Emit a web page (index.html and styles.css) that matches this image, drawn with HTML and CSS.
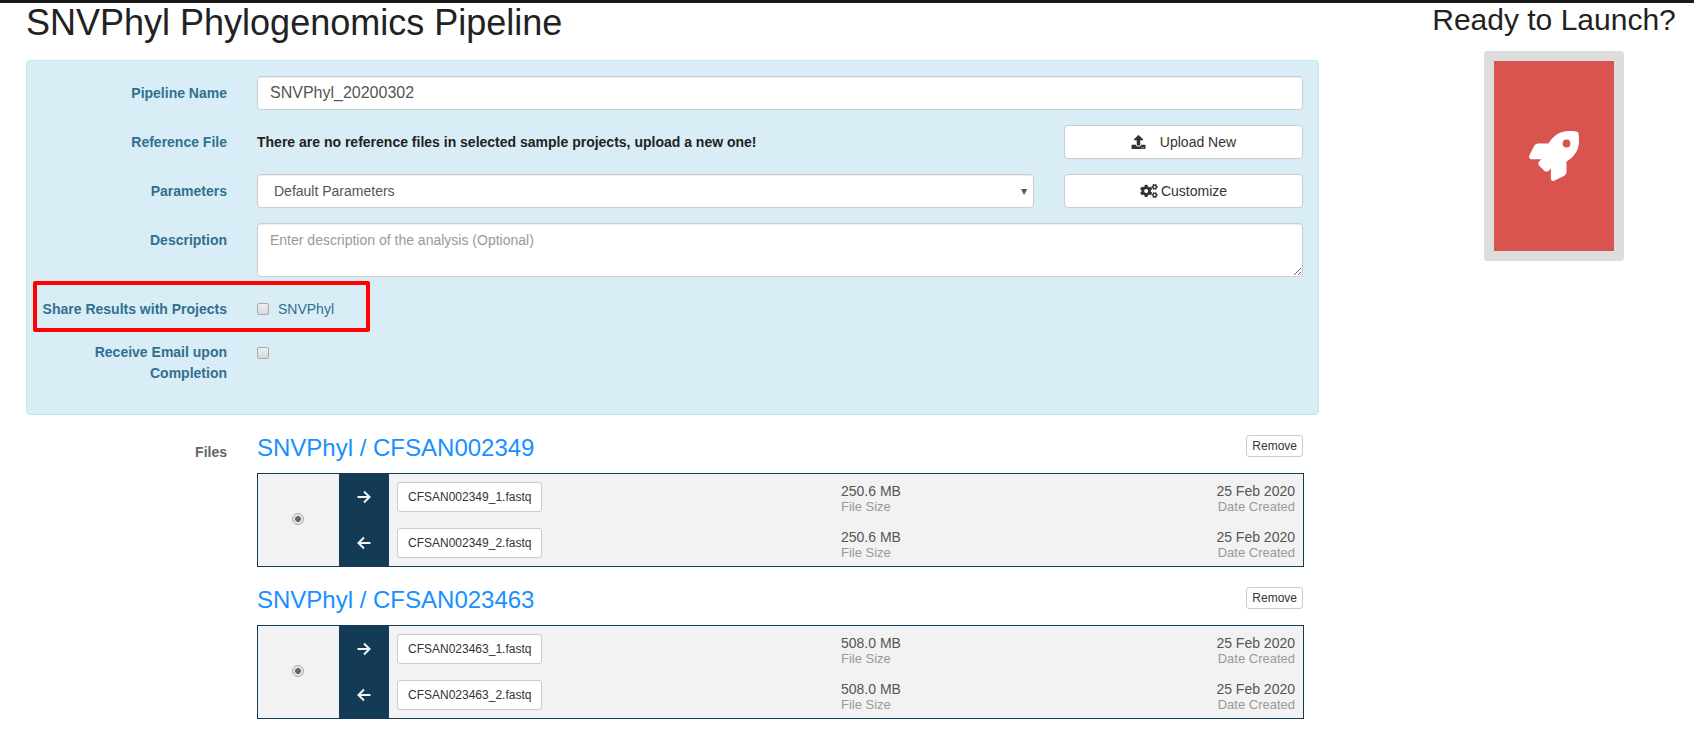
FILE: index.html
```html
<!DOCTYPE html>
<html>
	<head>
		<meta charset="UTF-8">
		<meta name="viewport" content="width=device-width, initial-scale=1.0" />
		<title>SNVPhyl Phylogenomics Pipeline</title>
		<link rel="stylesheet" href="styles.css">
	</head>
	<body>
		<svg class="sprite">
			<symbol id="i-upload" viewBox="0 0 512 512"><path d="M296 384h-80c-13.3 0-24-10.7-24-24V192h-87.7c-17.8 0-26.7-21.5-14.1-34.1L242.3 5.7c7.5-7.5 19.8-7.5 27.3 0l152.2 152.2c12.6 12.6 3.7 34.1-14.1 34.1H320v168c0 13.3-10.7 24-24 24zm216-8v112c0 13.3-10.7 24-24 24H24c-13.3 0-24-10.7-24-24V376c0-13.3 10.7-24 24-24h136v8c0 30.9 25.1 56 56 56h80c30.9 0 56-25.1 56-56v-8h136c13.3 0 24 10.7 24 24zm-124 88c0-11-9-20-20-20s-20 9-20 20 9 20 20 20 20-9 20-20zm64 0c0-11-9-20-20-20s-20 9-20 20 9 20 20 20 20-9 20-20z"/></symbol>
			<symbol id="i-cogs" viewBox="0 0 640 512"><path d="M512.1 191l-8.2 14.3c-3 5.3-9.4 7.5-15.1 5.4-11.8-4.4-22.6-10.7-32.1-18.6-4.6-3.8-5.8-10.5-2.8-15.7l8.2-14.3c-6.9-8-12.3-17.3-15.9-27.4h-16.5c-6 0-11.2-4.3-12.2-10.3-2-12-2.1-24.6 0-37.1 1-6 6.2-10.4 12.2-10.4h16.5c3.6-10.1 9-19.4 15.9-27.4l-8.2-14.3c-3-5.2-1.9-11.9 2.8-15.7 9.5-7.9 20.4-14.2 32.1-18.6 5.7-2.1 12.1.1 15.1 5.4l8.2 14.3c10.5-1.9 21.2-1.9 31.7 0L552 6.3c3-5.3 9.4-7.5 15.1-5.4 11.8 4.4 22.6 10.7 32.1 18.6 4.6 3.8 5.8 10.5 2.8 15.7l-8.2 14.3c6.9 8 12.3 17.3 15.9 27.4h16.5c6 0 11.2 4.3 12.2 10.3 2 12 2.1 24.6 0 37.1-1 6-6.2 10.4-12.2 10.4h-16.5c-3.6 10.1-9 19.4-15.9 27.4l8.2 14.3c3 5.2 1.9 11.9-2.8 15.7-9.5 7.9-20.4 14.2-32.1 18.6-5.7 2.1-12.1-.1-15.1-5.4l-8.2-14.3c-10.4 1.9-21.2 1.9-31.7 0zm-10.5-58.8c38.5 29.6 82.4-14.3 52.8-52.8-38.5-29.7-82.4 14.3-52.8 52.8zM386.3 286.1l33.7 16.8c10.1 5.8 14.5 18.1 10.5 29.1-8.9 24.2-26.4 46.4-42.6 65.8-7.4 8.9-20.2 11.1-30.3 5.3l-29.1-16.8c-16 13.7-34.6 24.6-54.9 31.7v33.6c0 11.6-8.3 21.6-19.7 23.6-24.6 4.2-50.4 4.4-75.9 0-11.5-2-20-11.9-20-23.6V418c-20.3-7.2-38.9-18-54.9-31.7L74 403c-10 5.8-22.9 3.6-30.3-5.3-16.2-19.4-33.3-41.6-42.2-65.7-4-10.9.4-23.2 10.5-29.1l33.3-16.8c-3.9-20.9-3.9-42.4 0-63.4L12 205.8c-10.1-5.8-14.6-18.1-10.5-29 8.9-24.2 26-46.4 42.2-65.8 7.4-8.9 20.2-11.1 30.3-5.3l29.1 16.8c16-13.7 34.6-24.6 54.9-31.7V57.1c0-11.5 8.2-21.5 19.6-23.5 24.6-4.2 50.5-4.4 76-.1 11.5 2 20 11.9 20 23.6v33.6c20.3 7.2 38.9 18 54.9 31.7l29.1-16.8c10-5.8 22.9-3.6 30.3 5.3 16.2 19.4 33.2 41.6 42.1 65.8 4 10.9.1 23.2-10 29.1l-33.7 16.8c3.9 21 3.9 42.5 0 63.5zm-117.6 21.1c59.2-77-28.7-164.9-105.7-105.7-59.2 77 28.7 164.9 105.7 105.7zm243.4 182.7l-8.2 14.3c-3 5.3-9.4 7.5-15.1 5.4-11.8-4.4-22.6-10.7-32.1-18.6-4.6-3.8-5.8-10.5-2.8-15.7l8.2-14.3c-6.9-8-12.3-17.3-15.9-27.4h-16.5c-6 0-11.2-4.3-12.2-10.3-2-12-2.1-24.6 0-37.1 1-6 6.2-10.4 12.2-10.4h16.5c3.6-10.1 9-19.4 15.9-27.4l-8.2-14.3c-3-5.2-1.9-11.9 2.8-15.7 9.5-7.9 20.4-14.2 32.1-18.6 5.7-2.1 12.1.1 15.1 5.4l8.2 14.3c10.5-1.9 21.2-1.9 31.7 0l8.2-14.3c3-5.3 9.4-7.5 15.1-5.4 11.8 4.4 22.6 10.7 32.1 18.6 4.6 3.8 5.8 10.5 2.8 15.7l-8.2 14.3c6.9 8 12.3 17.3 15.9 27.4h16.5c6 0 11.2 4.3 12.2 10.3 2 12 2.1 24.6 0 37.1-1 6-6.2 10.4-12.2 10.4h-16.5c-3.6 10.1-9 19.4-15.9 27.4l8.2 14.3c3 5.2 1.9 11.9-2.8 15.7-9.5 7.9-20.4 14.2-32.1 18.6-5.7 2.1-12.1-.1-15.1-5.4l-8.2-14.3c-10.4 1.9-21.2 1.9-31.7 0zM501.6 431c38.5 29.6 82.4-14.3 52.8-52.8-38.5-29.6-82.4 14.3-52.8 52.8z"/></symbol>
			<symbol id="i-rocket" viewBox="0 0 512 512"><path d="M505.12019,19.09375c-1.18945-5.53125-6.65819-11-12.207-12.1875C460.716,0,435.507,0,410.40747,0,307.17523,0,245.26909,55.20312,199.05238,128H94.83772c-16.34763.01562-35.55658,11.875-42.88664,26.48438L2.51562,253.29688A28.4,28.4,0,0,0,0,264a24.00867,24.00867,0,0,0,24.00582,24H127.81618l-22.47457,22.46875c-11.36521,11.36133-12.99607,32.25781,0,45.25L156.24582,406.625c11.15623,11.1875,32.15619,13.15625,45.27726,0l22.47457-22.46875V488a24.00867,24.00867,0,0,0,24.00581,24,28.55934,28.55934,0,0,0,10.707-2.51562l98.72834-49.39063c14.62888-7.29687,26.50776-26.5,26.50776-42.85937V312.79688c72.59753-46.3125,128.03493-108.40626,128.03493-211.09376C512.07526,76.5,512.07526,51.29688,505.12019,19.09375ZM384.04033,168A40,40,0,1,1,424.05,128,40.02322,40.02322,0,0,1,384.04033,168Z"/></symbol>
			<symbol id="i-right" viewBox="0 0 14 14"><path class="arrow-line" d="M.5 7H12.5M7 1.5L12.5 7L7 12.5"/></symbol>
			<symbol id="i-left" viewBox="0 0 14 14"><path class="arrow-line" d="M13.5 7H1.5M7 1.5L1.5 7L7 12.5"/></symbol>
		</svg>

		<div class="page">
			<div class="main">
				<h1 class="title">SNVPhyl Phylogenomics Pipeline</h1>

				<form class="panel">
					<div class="row">
						<label class="row-label">Pipeline Name</label>
						<input class="control control-name" type="text" value="SNVPhyl_20200302">
					</div>
					<div class="row">
						<label class="row-label">Reference File</label>
						<div class="row-split">
							<strong class="no-refs">There are no reference files in selected sample projects, upload a new one!</strong>
							<button class="btn btn-side" type="button">
								<svg class="icon icon-upload"><use href="#i-upload"></use></svg>Upload New
							</button>
						</div>
					</div>
					<div class="row">
						<label class="row-label">Parameters</label>
						<div class="row-split">
							<div class="select-wrap">
								<select class="control control-select">
									<option>Default Parameters</option>
								</select>
							</div>
							<button class="btn btn-side" type="button">
								<svg class="icon icon-cogs"><use href="#i-cogs"></use></svg>Customize
							</button>
						</div>
					</div>
					<div class="row">
						<label class="row-label">Description</label>
						<textarea class="control control-area" placeholder="Enter description of the analysis (Optional)"></textarea>
					</div>
					<div class="row row-share">
						<div class="highlight"></div>
						<label class="row-label">Share Results with Projects</label>
						<label class="check-line"><input class="check" type="checkbox">SNVPhyl</label>
					</div>
					<div class="row row-email">
						<label class="row-label">Receive Email upon Completion</label>
						<div class="check-line"><input class="check" type="checkbox"></div>
					</div>
				</form>

				<div class="files">
					<div class="files-label">Files</div>
					<div class="files-list">
						<section class="sample">
							<div class="sample-head">
								<h2 class="sample-name">SNVPhyl / CFSAN002349</h2>
								<button class="btn btn-xs" type="button">Remove</button>
							</div>
							<div class="pair">
								<div class="pair-pick"><input class="radio" type="radio" checked></div>
								<div class="pair-rows">
									<div class="file">
										<div class="file-dir"><svg class="icon-arrow"><use href="#i-right"></use></svg></div>
										<div class="file-name"><span class="file-btn">CFSAN002349_1.fastq</span></div>
										<div class="file-meta"><div class="meta-value">250.6 MB</div><div class="meta-key">File Size</div></div>
										<div class="file-meta file-date"><div class="meta-value">25 Feb 2020</div><div class="meta-key">Date Created</div></div>
									</div>
									<div class="file">
										<div class="file-dir"><svg class="icon-arrow"><use href="#i-left"></use></svg></div>
										<div class="file-name"><span class="file-btn">CFSAN002349_2.fastq</span></div>
										<div class="file-meta"><div class="meta-value">250.6 MB</div><div class="meta-key">File Size</div></div>
										<div class="file-meta file-date"><div class="meta-value">25 Feb 2020</div><div class="meta-key">Date Created</div></div>
									</div>
								</div>
							</div>
						</section>

						<section class="sample">
							<div class="sample-head">
								<h2 class="sample-name">SNVPhyl / CFSAN023463</h2>
								<button class="btn btn-xs" type="button">Remove</button>
							</div>
							<div class="pair">
								<div class="pair-pick"><input class="radio" type="radio" checked></div>
								<div class="pair-rows">
									<div class="file">
										<div class="file-dir"><svg class="icon-arrow"><use href="#i-right"></use></svg></div>
										<div class="file-name"><span class="file-btn">CFSAN023463_1.fastq</span></div>
										<div class="file-meta"><div class="meta-value">508.0 MB</div><div class="meta-key">File Size</div></div>
										<div class="file-meta file-date"><div class="meta-value">25 Feb 2020</div><div class="meta-key">Date Created</div></div>
									</div>
									<div class="file">
										<div class="file-dir"><svg class="icon-arrow"><use href="#i-left"></use></svg></div>
										<div class="file-name"><span class="file-btn">CFSAN023463_2.fastq</span></div>
										<div class="file-meta"><div class="meta-value">508.0 MB</div><div class="meta-key">File Size</div></div>
										<div class="file-meta file-date"><div class="meta-value">25 Feb 2020</div><div class="meta-key">Date Created</div></div>
									</div>
								</div>
							</div>
						</section>
					</div>
				</div>
			</div>

			<aside class="launch">
				<h2 class="launch-title">Ready to Launch?</h2>
				<div class="launch-well">
					<button class="launch-btn" type="button"><svg class="icon-rocket"><use href="#i-rocket"></use></svg></button>
				</div>
			</aside>
		</div>
	</body>
</html>
```

FILE: styles.css
```css
*{box-sizing:border-box;}
html,body{height:100%;}
body{margin:0;border-top:3px solid #1a1a1a;background:#fff;color:#333;font-family:"Liberation Sans",Arial,sans-serif;font-size:14px;line-height:20px;overflow:hidden;}
.sprite{display:none;}
.page{display:flex;}
.main{width:1293px;margin-left:26px;flex:none;}

.title{margin:0 0 17px;font-size:36px;line-height:40px;font-weight:400;color:#222;}

.panel{display:flex;flex-direction:column;gap:15px;padding:15px 15px 30px;background:#d9edf7;border:1px solid #bce8f1;border-radius:4px;}
.row{display:grid;grid-template-columns:185px 1fr;column-gap:30px;position:relative;}
.row-label{padding-top:7px;text-align:right;font-weight:700;color:#31708f;}
.row-split{display:flex;gap:30px;align-items:center;}

.control{display:block;width:100%;height:34px;padding:6px 12px;background:#fff;border:1px solid #ccc;border-radius:4px;box-shadow:inset 0 1px 1px rgba(0,0,0,.075);color:#555;font-family:inherit;font-size:14px;}
.control-name{font-size:16px;}
.control-area{height:54px;line-height:20px;}
.control-area::placeholder{color:#999;opacity:1;}
.select-wrap{position:relative;flex:1;}
.select-wrap::after{content:"\25BE";position:absolute;top:7px;right:7px;font-size:12px;color:#555;}
.control-select{appearance:none;padding-left:16px;}

.no-refs{flex:1;color:#222;}
.btn{background:#fff;border:1px solid #ccc;border-radius:4px;color:#333;font-family:inherit;font-size:14px;}
.btn-side{display:flex;align-items:center;justify-content:center;width:239px;height:34px;flex:none;}
.btn-xs{height:22px;padding:0 5px;border-radius:3px;font-size:12px;}
.icon{fill:#333;height:14px;}
.icon-upload{width:15px;margin-right:14px;}
.icon-cogs{width:18px;margin-right:3px;}

.row-share{height:28px;}
.row-email .row-label{line-height:21px;}
.highlight{position:absolute;left:-9px;top:-11px;width:337px;height:51px;border:4px solid #f00;border-radius:2px;pointer-events:none;}
.check-line{display:flex;align-items:center;gap:9px;height:20px;margin-top:7px;color:#31708f;font-weight:400;}
.row-email .check-line{margin-top:8px;}
.check{appearance:none;width:12px;height:12px;margin:0;background:linear-gradient(#eee,#d8d8d8);border:1px solid #a9a9a9;border-radius:2px;}

.files{display:grid;grid-template-columns:185px 1047px;column-gap:30px;margin:19px 0 0 16px;}
.files-label{padding-top:8px;text-align:right;font-weight:700;color:#666;}
.files-list{display:flex;flex-direction:column;gap:19px;}
.sample-head{display:flex;justify-content:space-between;align-items:flex-start;height:27px;margin-bottom:12px;padding-top:1px;}
.sample-name{margin:-1px 0 0;font-size:24px;line-height:27px;font-weight:400;color:#1890ff;}
.sample-head .btn{margin-right:1px;}

.pair{display:flex;height:94px;background:#f2f2f2;border:1px solid #143b55;}
.pair-pick{display:flex;align-items:center;justify-content:center;width:81px;padding:0 1px 2px 0;flex:none;}
.radio{appearance:none;width:12px;height:12px;margin:0;background:radial-gradient(circle,#666 0,#666 2.6px,#e4e4e4 3.2px);border:1px solid #aaa;border-radius:50%;}
.pair-rows{flex:1;}
.file{display:grid;grid-template-columns:50px 452px 1fr auto;height:46px;padding-right:8px;}
.file-dir{display:flex;align-items:center;justify-content:center;background:#143b55;}
.icon-arrow{width:14px;height:14px;}
.arrow-line{fill:none;stroke:#f5f5f5;stroke-width:2;}
.file-name{padding:8px 0 0 8px;}
.file-btn{display:inline-block;height:30px;padding:0 10px;background:#fff;border:1px solid #ccc;border-radius:3px;font-size:12px;line-height:28px;color:#333;}
.file-meta{padding-top:9px;line-height:16px;}
.file-date{text-align:right;}
.meta-value{color:#555;}
.meta-key{font-size:13px;color:#999;}

.launch{display:flex;flex-direction:column;align-items:center;width:280px;margin-left:auto;flex:none;}
.launch-title{margin:0 0 15px;font-size:30px;line-height:33px;font-weight:400;color:#222;}
.launch-well{padding:10px;background:#ddd;border-radius:3px;}
.launch-btn{display:flex;align-items:center;justify-content:center;width:120px;height:190px;padding:0;background:#d9534f;border:0;}
.icon-rocket{width:50px;height:50px;fill:#fff;}
```
